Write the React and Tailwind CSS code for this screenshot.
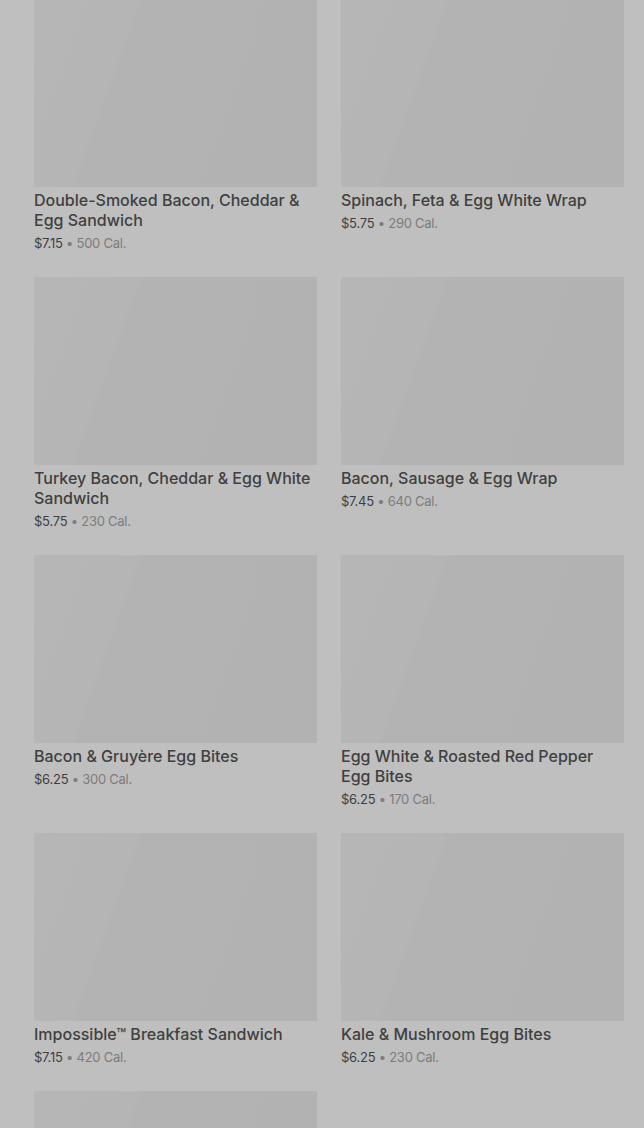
import React from "react";

const items = [
  { name: "Double-Smoked Bacon, Cheddar & Egg Sandwich", price: "$7.15", cal: "500 Cal." },
  { name: "Spinach, Feta & Egg White Wrap", price: "$5.75", cal: "290 Cal." },
  { name: "Turkey Bacon, Cheddar & Egg White Sandwich", price: "$5.75", cal: "230 Cal." },
  { name: "Bacon, Sausage & Egg Wrap", price: "$7.45", cal: "640 Cal." },
  { name: "Bacon & Gruyère Egg Bites", price: "$6.25", cal: "300 Cal." },
  { name: "Egg White & Roasted Red Pepper Egg Bites", price: "$6.25", cal: "170 Cal." },
  { name: "Impossible™ Breakfast Sandwich", price: "$7.15", cal: "420 Cal." },
  { name: "Kale & Mushroom Egg Bites", price: "$6.25", cal: "230 Cal." },
  { name: "", price: "", cal: "" },
];

// Single product tile under the dimmed overlay
const ProductCard = ({ item }) => {
  return (
    <div className="flex flex-col pb-[25px]">
      <div className="h-[188px] w-full bg-[linear-gradient(110deg,#b6b6b6_0%,#b5b5b5_30%,#b3b3b3_31%,#b2b2b2_100%)]" />
      {item.name && (
        <>
          <div className="mt-[3px] text-[16px] leading-5 font-medium text-[#404040]">
            {item.name}
          </div>
          <div className="mt-1 text-[13px] leading-[18px] tracking-[-0.25px]">
            <span className="text-[#3f3f3f]">{item.price}</span>
            <span className="text-[#7c7c7c]"> • {item.cal}</span>
          </div>
        </>
      )}
    </div>
  );
};

export default function App() {
  return (
    <div
      className="w-[644px] h-[1128px] overflow-hidden bg-[#bfbfbf]"
      style={{ fontFamily: "Inter, 'Liberation Sans', sans-serif" }}
    >
      <div className="-mt-px grid grid-cols-2 gap-x-6 pl-[34px] pr-5">
        {items.map((item, i) => (
          <ProductCard key={i} item={item} />
        ))}
      </div>
    </div>
  );
}
